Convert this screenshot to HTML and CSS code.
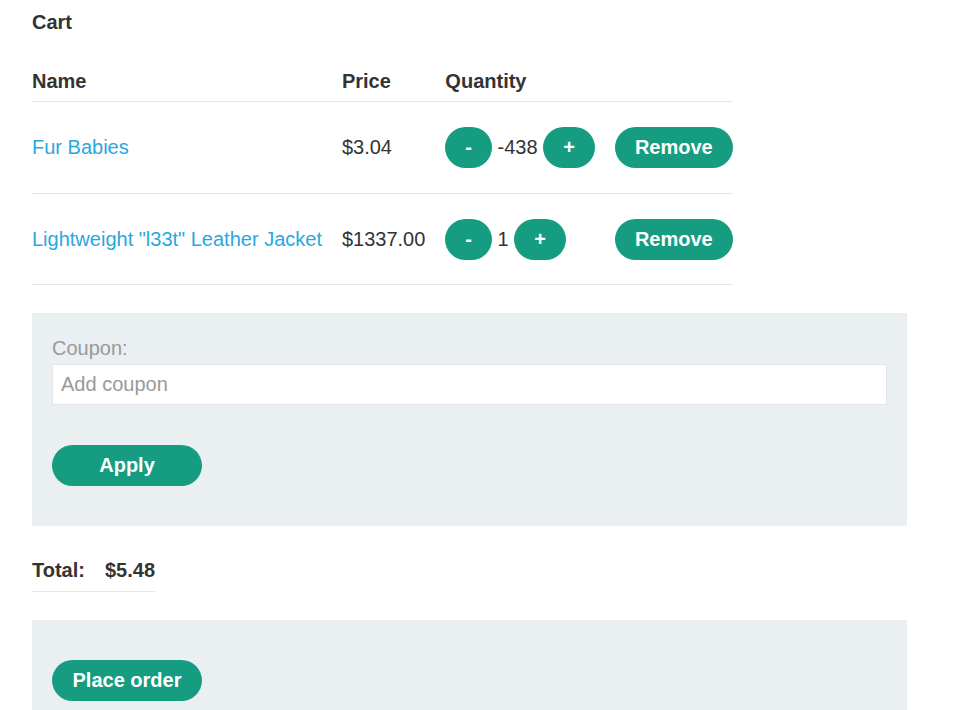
FILE: index.html
```html
<!DOCTYPE html>
<html lang="en">
<head>
<meta charset="utf-8">
<title>Cart</title>
<link rel="stylesheet" href="styles.css">
</head>
<body>
<div class="page">
  <p class="title">Cart</p>
  <table class="cart">
    <thead>
      <tr><th>Name</th><th>Price</th><th>Quantity</th><th></th></tr>
    </thead>
    <tbody>
      <tr>
        <td><a href="#">Fur Babies</a></td>
        <td>$3.04</td>
        <td><button class="btn">-</button> -438 <button class="btn">+</button></td>
        <td><button class="btn">Remove</button></td>
      </tr>
      <tr>
        <td><a href="#">Lightweight "l33t" Leather Jacket</a></td>
        <td>$1337.00</td>
        <td><button class="btn">-</button> 1 <button class="btn">+</button></td>
        <td><button class="btn">Remove</button></td>
      </tr>
    </tbody>
  </table>

  <form class="panel coupon">
    <label class="label" for="coupon">Coupon:</label>
    <input id="coupon" class="input" type="text" placeholder="Add coupon">
    <button class="btn wide" type="button">Apply</button>
  </form>

  <table class="total">
    <tr><th>Total:</th><th>$5.48</th></tr>
  </table>

  <div class="panel order">
    <button class="btn wide" type="button">Place order</button>
  </div>
</div>
</body>
</html>
```
FILE: styles.css
```css
html, body {
  margin: 0;
  padding: 0;
  background: #fff;
}
body {
  font-family: "Liberation Sans", Arial, sans-serif;
  font-size: 20px;
  line-height: 23px;
  color: #333;
}
.page {
  padding: 11px 52px 0 32px;
}
.title {
  margin: 0 0 26px;
  font-weight: bold;
}
table {
  border-collapse: collapse;
  border-spacing: 0;
}
.cart th {
  text-align: left;
  font-weight: bold;
  padding: 10px 20px 8px 0;
  border-bottom: 1px solid #e6e6e6;
}
.cart td {
  padding: 25px 20px 25px 0;
  border-bottom: 1px solid #e6e6e6;
  vertical-align: middle;
  white-space: nowrap;
}
.cart tbody tr:last-child td {
  padding-bottom: 24px;
}
.cart td:last-child, .cart th:last-child {
  padding-right: 0;
}
.cart a {
  color: #29a8e0;
  text-decoration: none;
}
.btn {
  font-family: "Liberation Sans", Arial, sans-serif;
  font-size: 20px;
  font-weight: bold;
  line-height: 23px;
  color: #fff;
  background: #169c80;
  border: none;
  border-radius: 21px;
  padding: 9px 20px;
  cursor: pointer;
}
.btn.wide {
  min-width: 150px;
}
.panel {
  background: #eaeff2;
}
.coupon {
  margin: 28px 0 0;
  padding: 24px 20px 40px;
  display: flex;
  flex-direction: column;
  align-items: flex-start;
}
.label {
  color: #999;
  margin-bottom: 4px;
}
.input {
  box-sizing: border-box;
  width: 100%;
  height: 41px;
  font-family: "Liberation Sans", Arial, sans-serif;
  font-size: 20px;
  color: #333;
  padding: 0 8px;
  border: 1px solid #e4e4e4;
  background: #fff;
  margin-bottom: 40px;
}
.input::placeholder {
  color: #999;
}
.total {
  margin-top: 24px;
}
.total th {
  text-align: left;
  font-weight: bold;
  padding: 9px 0 9px 0;
  border-bottom: 1px solid #e6e6e6;
}
.total th:first-child {
  padding-right: 20px;
}
.order {
  margin-top: 28px;
  padding: 40px 20px 40px;
}
```
